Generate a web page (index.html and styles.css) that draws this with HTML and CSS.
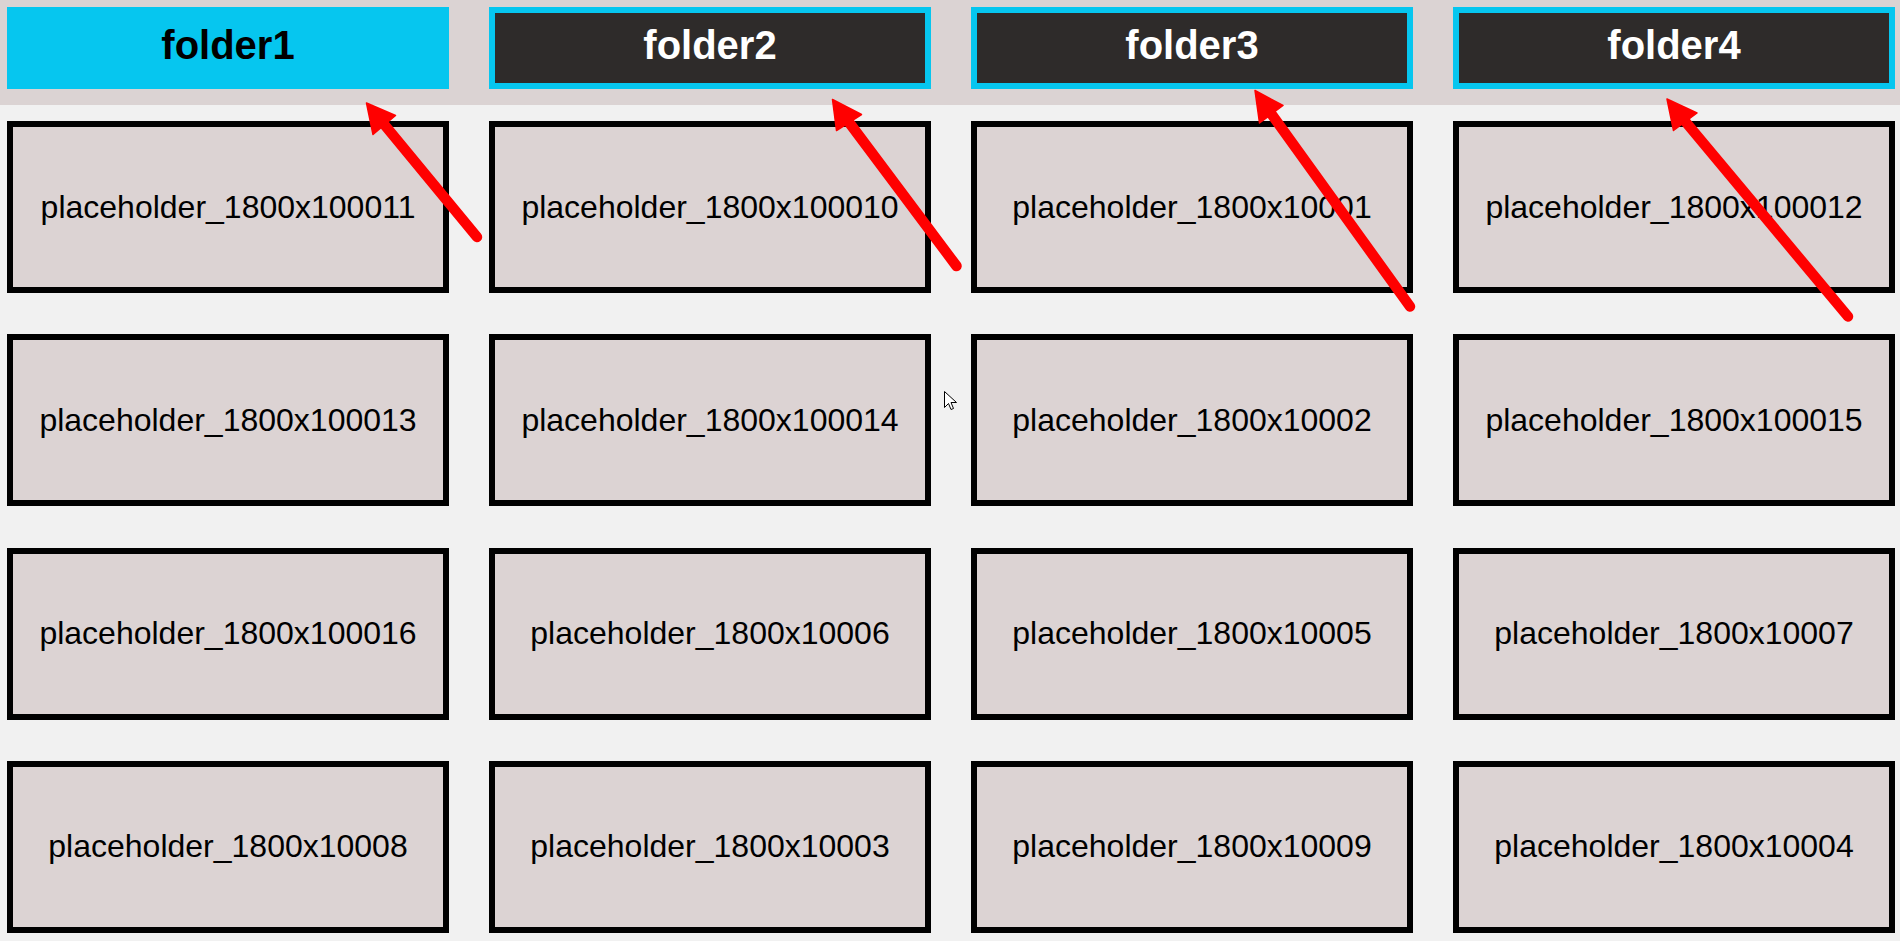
FILE: index.html
```html
<!DOCTYPE html>
<html lang="en">
<head>
<meta charset="utf-8">
<title>folders</title>
<link rel="stylesheet" href="styles.css">
</head>
<body>
<div class="page">
  <header class="tabs">
    <div class="tab tab-active">folder1</div>
    <div class="tab">folder2</div>
    <div class="tab">folder3</div>
    <div class="tab">folder4</div>
  </header>
  <main class="grid">
    <div class="card">placeholder_1800x100011</div>
    <div class="card">placeholder_1800x100010</div>
    <div class="card">placeholder_1800x10001</div>
    <div class="card">placeholder_1800x100012</div>
    <div class="card">placeholder_1800x100013</div>
    <div class="card">placeholder_1800x100014</div>
    <div class="card">placeholder_1800x10002</div>
    <div class="card">placeholder_1800x100015</div>
    <div class="card">placeholder_1800x100016</div>
    <div class="card">placeholder_1800x10006</div>
    <div class="card">placeholder_1800x10005</div>
    <div class="card">placeholder_1800x10007</div>
    <div class="card">placeholder_1800x10008</div>
    <div class="card">placeholder_1800x10003</div>
    <div class="card">placeholder_1800x10009</div>
    <div class="card">placeholder_1800x10004</div>
  </main>
  <svg class="annotations" width="1900" height="941" viewBox="0 0 1900 941" aria-hidden="true">
    <g class="arrow">
      <line x1="477" y1="237" x2="383" y2="123"/>
      <polygon points="366.5,103 395.5,115.5 373,134.5"/>
    </g>
    <g class="arrow">
      <line x1="956.5" y1="266" x2="848" y2="121"/>
      <polygon points="832.5,99.5 861.5,114.5 836.5,130.5"/>
    </g>
    <g class="arrow">
      <line x1="1410" y1="306.5" x2="1270" y2="112"/>
      <polygon points="1255,90.5 1283,105.5 1259.5,123"/>
    </g>
    <g class="arrow">
      <line x1="1848" y1="316.5" x2="1684" y2="120"/>
      <polygon points="1667,99 1697,113 1673.5,130.5"/>
    </g>
    <path class="cursor" d="M944.5 391.5 L944.5 407.5 L948.5 403.5 L951 409.5 L953.5 408.5 L951 402.5 L956.5 402.5 Z"/>
  </svg>
</div>
</body>
</html>
```

FILE: styles.css
```css
html, body {
  margin: 0;
  padding: 0;
}

body {
  background: #f1f1f1;
  font-family: "Liberation Sans", Arial, sans-serif;
  width: 1900px;
  height: 941px;
  overflow: hidden;
}

.page {
  position: relative;
  width: 1900px;
  height: 941px;
}

.tabs {
  display: grid;
  grid-template-columns: repeat(4, 1fr);
  column-gap: 40px;
  padding: 7px 5px 16px 7px;
  background: #dbd3d3;
  height: 82px;
}

.tab {
  box-sizing: border-box;
  height: 82px;
  display: flex;
  align-items: center;
  justify-content: center;
  padding-bottom: 6px;
  background: #2e2b2a;
  border: 6px solid #06c6ef;
  color: #ffffff;
  font-size: 40px;
  font-weight: 700;
}

.tab-active {
  background: #06c6ef;
  color: #000000;
}

.grid {
  display: grid;
  grid-template-columns: repeat(4, 1fr);
  grid-auto-rows: 172px;
  column-gap: 40px;
  row-gap: 41.3px;
  padding: 16px 5px 0 7px;
}

.card {
  box-sizing: border-box;
  background: #dcd3d3;
  border: 6px solid #000000;
  display: flex;
  align-items: center;
  justify-content: center;
  font-size: 32px;
  color: #000000;
  white-space: nowrap;
}

.annotations {
  position: absolute;
  left: 0;
  top: 0;
  pointer-events: none;
}

.arrow line {
  stroke: #ff0000;
  stroke-width: 10.5;
  stroke-linecap: round;
}

.arrow polygon {
  fill: #ff0000;
  stroke: #ff0000;
  stroke-width: 1.5;
  stroke-linejoin: round;
}

.cursor {
  fill: #ffffff;
  stroke: #000000;
  stroke-width: 1;
  stroke-linejoin: miter;
}
```
